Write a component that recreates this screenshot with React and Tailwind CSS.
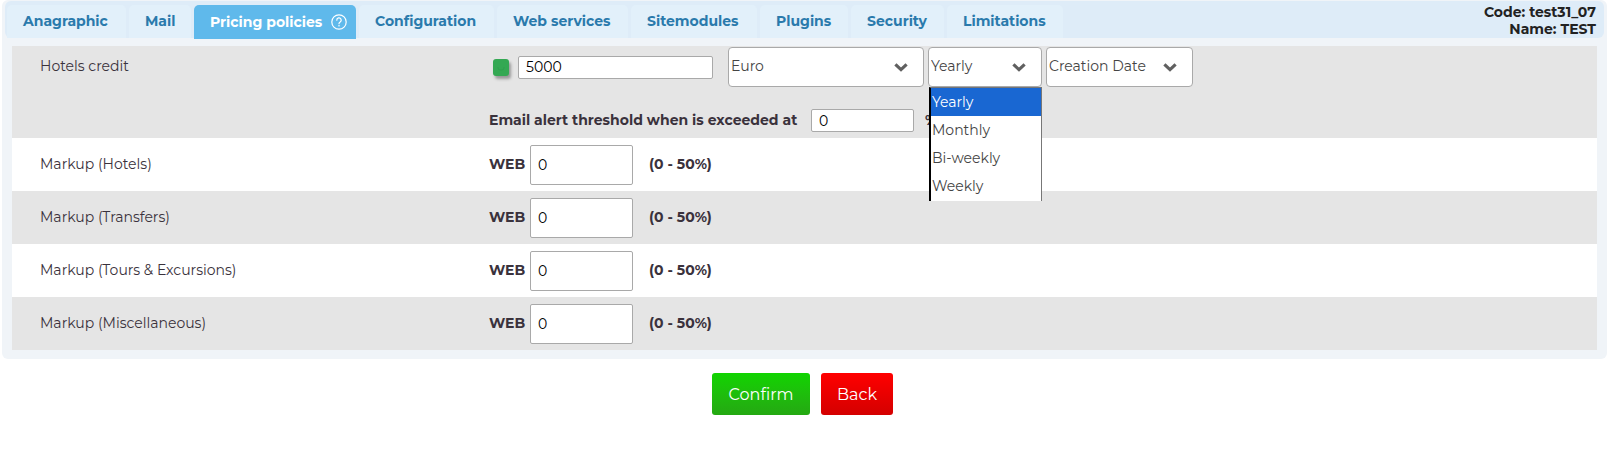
import React, { useState } from 'react';
import clsx from 'clsx';

const TABS = [
  { label: 'Anagraphic', width: 'w-[119px]' },
  { label: 'Mail', width: 'w-[62px]' },
  { label: 'Pricing policies', width: 'w-[162px]', help: true },
  { label: 'Configuration', width: 'w-[135px]' },
  { label: 'Web services', width: 'w-[131px]' },
  { label: 'Sitemodules', width: 'w-[126px]' },
  { label: 'Plugins', width: 'w-[88px]' },
  { label: 'Security', width: 'w-[93px]' },
  { label: 'Limitations', width: 'w-[116px]' },
];

const PERIODS = ['Yearly', 'Monthly', 'Bi-weekly', 'Weekly'];

const MARKUPS = [
  { id: 'hotels', label: 'Markup (Hotels)' },
  { id: 'transfers', label: 'Markup (Transfers)' },
  { id: 'tours', label: 'Markup (Tours & Excursions)' },
  { id: 'misc', label: 'Markup (Miscellaneous)' },
];

const HelpIcon = () => (
  <svg width="16" height="16" viewBox="0 0 16 16" fill="none" stroke="currentColor" className="shrink-0" aria-hidden="true">
    <circle cx="8" cy="8" r="7.2" strokeWidth="1.2" />
    <path d="M5.8 6.2a2.2 2.2 0 1 1 3.4 1.7c-.8.5-1.2.9-1.2 1.8" strokeWidth="1.2" strokeLinecap="round" />
    <circle cx="8" cy="11.8" r=".5" fill="currentColor" strokeWidth=".5" />
  </svg>
);

const Select = ({ label, value, onChange, options, className, children }) => (
  <div className={clsx('relative', className)}>
    <select
      aria-label={label}
      value={value}
      onChange={onChange}
      className="block h-10 w-full appearance-none rounded-[4px] border border-[#a9a9a9] bg-white pl-[2px] pr-9 pb-[2px] text-[#444] outline-none"
    >
      {options.map((o) => <option key={o}>{o}</option>)}
    </select>
    <svg
      width="14" height="9" viewBox="0 0 14 9" fill="none" stroke="#606060" strokeWidth="3.2"
      className="pointer-events-none absolute right-4 top-4" aria-hidden="true"
    >
      <path d="M1.4 1.4 7 6.6l5.600-5.200" />
    </svg>
    {children}
  </div>
);

const MarkupRow = ({ id, label }) => (
  <div className="flex h-[53px] items-center odd:bg-white even:bg-[#e5e5e5]">
    <label htmlFor={id} className="w-[477px] shrink-0 pl-7">{label}</label>
    <span className="w-[41px] shrink-0 font-bold">WEB</span>
    <input
      id={id}
      defaultValue="0"
      className="h-10 w-[103px] rounded-[2px] border border-[#a9a9a9] bg-white px-[7px] text-black outline-none"
    />
    <span className="pl-4 font-bold">(0 - 50%)</span>
  </div>
);

export default function App() {
  const [tab, setTab] = useState('Pricing policies');
  const [currency, setCurrency] = useState('Euro');
  const [period, setPeriod] = useState('Yearly');
  const [dateType, setDateType] = useState('Creation Date');
  const [open, setOpen] = useState(true);

  return (
    <div className="bg-white pl-[2px] pr-[7px] font-[Montserrat,Inter,sans-serif] text-[14px] leading-[17px] text-[#3a323c]">
      <div className="rounded-[6px] bg-[#f0f4f8] px-[3px] pb-[9px] pt-px">
        {/* Tabs */}
        <header className="flex h-[37px] justify-between rounded-[6px] bg-[#deecf8] pl-[2px] pr-2">
          <nav className="flex items-start gap-[3px] pt-1">
            {TABS.map((t) => (
              <button
                key={t.label}
                onClick={() => setTab(t.label)}
                className={clsx(
                  'flex shrink-0 items-center justify-between whitespace-nowrap rounded-t-[5px] pl-4 pr-[9px] font-bold',
                  t.width,
                  tab === t.label ? 'h-[34px] bg-[#5fb9eb] text-white' : 'h-[33px] bg-[#e2f0fa] text-[#2a7aac]',
                )}
              >
                {t.label}
                {t.help && <HelpIcon />}
              </button>
            ))}
          </nav>
          <div className="pt-[3px] text-right font-bold text-[#222]">
            <p>Code: test31_07</p>
            <p>Name: TEST</p>
          </div>
        </header>

        <main className="mx-[7px] mt-2">
          {/* Credit */}
          <div className="flex h-[92px] items-start bg-[#e5e5e5]">
            <label htmlFor="credit" className="w-[477px] shrink-0 pl-7 pt-3">Hotels credit</label>
            <div className="pt-px">
              <div className="flex h-10 items-center">
                <button
                  aria-label="Credit enabled"
                  className="ml-1 mr-[9px] flex h-[17px] w-4 items-center justify-center rounded-[3px] bg-[#34a853] shadow-[2px_3px_3px_#999]"
                >
                  <svg width="8" height="8" viewBox="0 0 8 8" fill="none" stroke="#2f9f4d" aria-hidden="true">
                    <path d="M1 4v1q0 2 2 2h2q2 0 2-2V4" />
                  </svg>
                </button>
                <input
                  id="credit"
                  defaultValue="5000"
                  className="h-[23px] w-[195px] rounded-[2px] border border-[#a9a9a9] bg-white px-[7px] text-black outline-none"
                />
                <Select
                  label="Currency"
                  className="ml-[15px] w-[196px]"
                  value={currency}
                  onChange={(e) => setCurrency(e.target.value)}
                  options={['Euro']}
                />
                <Select
                  label="Period"
                  className="ml-1 w-[114px]"
                  value={period}
                  onChange={(e) => setPeriod(e.target.value)}
                  options={PERIODS}
                >
                  {open && (
                    <ul
                      role="listbox"
                      className="absolute left-px top-10 z-10 w-[113px] border-l-2 border-r border-t border-l-black border-r-[#777] border-t-[#777] bg-white pb-px text-[#444]"
                    >
                      {PERIODS.map((p) => (
                        <li
                          key={p}
                          role="option"
                          aria-selected={p === period}
                          onClick={() => { setPeriod(p); setOpen(false); }}
                          className={clsx('h-7 pl-px leading-7', p === period && 'bg-[#1967d2] text-white')}
                        >
                          {p}
                        </li>
                      ))}
                    </ul>
                  )}
                </Select>
                <Select
                  label="Reference date"
                  className="ml-1 w-[147px]"
                  value={dateType}
                  onChange={(e) => setDateType(e.target.value)}
                  options={['Creation Date']}
                />
              </div>
              <div className="mt-[22px] flex items-center font-bold">
                <label htmlFor="threshold" className="w-[322px] whitespace-nowrap">Email alert threshold when is exceeded at</label>
                <input
                  id="threshold"
                  defaultValue="0"
                  className="h-[23px] w-[103px] rounded-[2px] border border-[#a9a9a9] bg-white px-[7px] font-normal text-black outline-none"
                />
                <span className="pl-[11px]">%</span>
              </div>
            </div>
          </div>

          {/* Markups */}
          <div>
            {MARKUPS.map((m) => <MarkupRow key={m.id} {...m} />)}
          </div>
        </main>
      </div>

      <footer className="flex justify-center gap-[11px] py-[14px] pr-1 text-[16px] text-white">
        <button className="h-[42px] w-[98px] rounded-[3px] bg-linear-to-b from-[#10d400] to-[#24a812]">Confirm</button>
        <button className="h-[42px] w-[72px] rounded-[3px] bg-linear-to-b from-[#ff0000] to-[#d40000]">Back</button>
      </footer>
    </div>
  );
}
